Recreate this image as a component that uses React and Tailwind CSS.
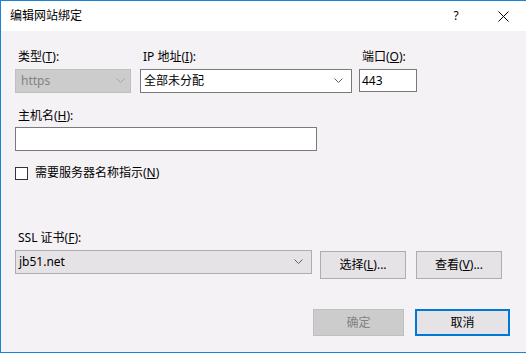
import React from "react";

const font = {
  fontFamily: '"Noto Sans", "Noto Sans CJK SC", sans-serif',
};

const Chevron = ({ color = "#606060" }) => (
  <svg width="9" height="6" viewBox="0 0 9 6" className="shrink-0">
    <polyline points="0.5,0.5 4.5,4.5 8.5,0.5" fill="none" stroke={color} strokeWidth="1" />
  </svg>
);

const Label = ({ children, className = "" }) => (
  <div className={`pl-[3px] h-[16px] leading-[16px] text-[12px] text-black whitespace-nowrap ${className}`}>
    {children}
  </div>
);

const App = () => {
  return (
    <div
      style={font}
      className="w-[526px] h-[353px] flex flex-col border-l border-t border-b border-[#1883d7] bg-[#f5f2f5] text-[12px] text-black overflow-hidden"
    >
      {/* title bar */}
      <div className="h-[30px] shrink-0 bg-white flex items-center pl-[9px]">
        <span className="leading-[16px]">编辑网站绑定</span>
        <div className="ml-auto flex items-center">
          <span className="w-[12px] text-center leading-[16px]">?</span>
          <svg width="11" height="11" viewBox="0 0 11 11" className="ml-[36px] mr-[17px]">
            <path d="M0.5 0.5 L10.5 10.5 M10.5 0.5 L0.5 10.5" stroke="#000" strokeWidth="1" />
          </svg>
        </div>
      </div>

      {/* body */}
      <div className="flex-1 flex flex-col pl-[14px]">
        {/* type / ip / port */}
        <div className="flex items-start mt-[18px]">
          <div className="flex flex-col w-[116px]">
            <Label>类型(<u>T</u>):</Label>
            <div className="mt-[4px] h-[24px] flex items-center justify-between px-[5px] bg-[#cccccc] border border-[#bfbfbf] text-[#838383]">
              <span className="leading-[16px]">https</span>
              <Chevron color="#a6a6a6" />
            </div>
          </div>
          <div className="flex flex-col w-[212px] ml-[9px]">
            <Label>IP 地址(<u>I</u>):</Label>
            <div className="mt-[4px] h-[24px] flex items-center justify-between pl-[3px] pr-[8px] bg-white border border-[#7a7a7a]">
              <span className="leading-[16px]">全部未分配</span>
              <Chevron />
            </div>
          </div>
          <div className="flex flex-col w-[58px] ml-[7px]">
            <Label className="pl-0">端口(<u>O</u>):</Label>
            <div className="mt-[4px] h-[23px] flex items-center pl-[2px] bg-white border border-[#7a7a7a]">
              <span className="leading-[16px]">443</span>
            </div>
          </div>
        </div>

        {/* host name */}
        <Label className="mt-[15px]">主机名(<u>H</u>):</Label>
        <div className="mt-[3px] w-[302px] h-[24px] bg-white border border-[#7a7a7a]" />

        {/* SNI */}
        <div className="flex items-center mt-[14px]">
          <div className="w-[13px] h-[13px] bg-white border border-[#333333]" />
          <span className="ml-[7px] leading-[16px]">需要服务器名称指示(<u>N</u>)</span>
        </div>

        {/* SSL */}
        <Label className="mt-[49px]">SSL 证书(<u>F</u>):</Label>
        <div className="flex items-start mt-[4px]">
          <div className="w-[297px] h-[24px] flex items-center justify-between pl-[3px] pr-[8px] bg-[#e6e3e6] border border-[#adadad]">
            <span className="leading-[16px]">jb51.net</span>
            <Chevron />
          </div>
          <button className="ml-[8px] mt-[1px] w-[86px] h-[28px] bg-[#e6e3e6] border border-[#adadad] leading-[16px]">
            选择(<u>L</u>)...
          </button>
          <button className="ml-[10px] mt-[1px] w-[86px] h-[28px] bg-[#e6e3e6] border border-[#adadad] leading-[16px]">
            查看(<u>V</u>)...
          </button>
        </div>

        {/* ok / cancel */}
        <div className="flex justify-end mt-[30px] pr-[16px]">
          <button
            disabled
            className="w-[91px] h-[27px] bg-[#cccccc] border border-[#bfbfbf] text-[#838383] leading-[16px]"
          >
            确定
          </button>
          <button className="ml-[11px] w-[95px] h-[27px] bg-[#e6e3e6] border-2 border-[#0078d7] leading-[16px]">
            取消
          </button>
        </div>
      </div>
    </div>
  );
};

export default App;
